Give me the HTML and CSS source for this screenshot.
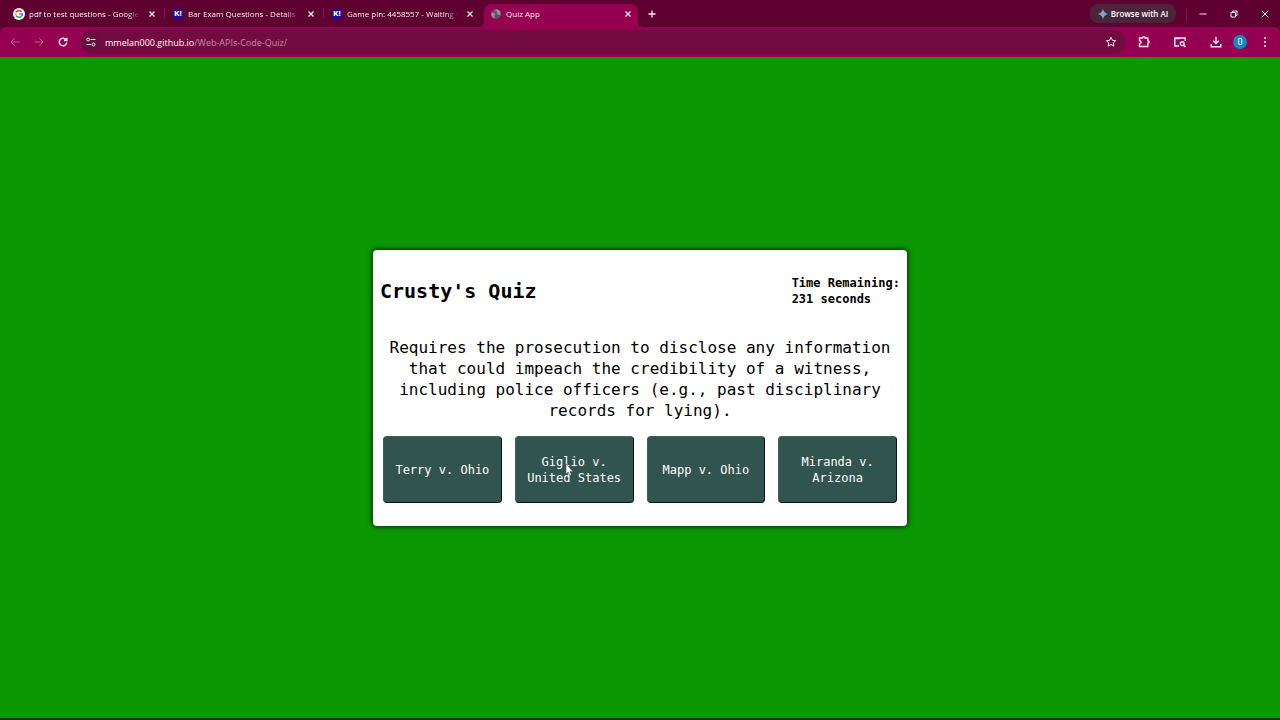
FILE: index.html
```html
<!DOCTYPE html>
<html lang="en">
<head>
<meta charset="utf-8">
<title>Quiz App</title>
<link rel="stylesheet" href="styles.css">
</head>
<body>
<header class="browser">
  <div class="strip">
    <div class="tabs" role="tablist">
      <div class="tab">
        <svg class="favicon" viewBox="0 0 12 12"><circle cx="6" cy="6" r="6" fill="#fff"/><g fill="none" stroke-width="1.6"><path d="M8.7 3.9A3.4 3.4 0 0 0 3.2 4.2" stroke="#ea4335"/><path d="M3.2 4.2A3.4 3.4 0 0 0 3.2 7.8" stroke="#fbbc05"/><path d="M3.2 7.8A3.4 3.4 0 0 0 8.3 8.5" stroke="#34a853"/><path d="M8.3 8.5A3.4 3.4 0 0 0 9.4 6H6.2" stroke="#4285f4"/></g></svg>
        <span class="tab-title fade">pdf to test questions - Google S</span>
        <button class="close" aria-label="Close tab"><svg viewBox="0 0 8 8"><path d="M1.5 1.5l5 5m0-5l-5 5"/></svg></button>
      </div>
      <div class="tab">
        <span class="favicon kahoot">K!</span>
        <span class="tab-title fade">Bar Exam Questions - Details - K</span>
        <button class="close" aria-label="Close tab"><svg viewBox="0 0 8 8"><path d="M1.5 1.5l5 5m0-5l-5 5"/></svg></button>
      </div>
      <div class="tab">
        <span class="favicon kahoot">K!</span>
        <span class="tab-title fade">Game pin: 4458557 - Waiting fo</span>
        <button class="close" aria-label="Close tab"><svg viewBox="0 0 8 8"><path d="M1.5 1.5l5 5m0-5l-5 5"/></svg></button>
      </div>
      <div class="tab active">
        <svg class="favicon globe" viewBox="0 0 12 12"><circle cx="6" cy="6" r="5" fill="#5d5262"/><path d="M1.200 5l2.600-.2 1.600 1.400-1 1.200.4 3C2.500 10 1 8 1.200 5zM5.500 1.200l3 .7 1.800 1.800.4 2.800-1.700.5L7 5.800 7.200 4 5.500 3z" fill="#a08c9c"/></svg>
        <span class="tab-title">Quiz App</span>
        <button class="close" aria-label="Close tab"><svg viewBox="0 0 8 8"><path d="M1.5 1.5l5 5m0-5l-5 5"/></svg></button>
      </div>
      <button class="new-tab" aria-label="New tab"><svg viewBox="0 0 8 8"><path d="M4 .5v7M.5 4h7"/></svg></button>
    </div>
    <button class="ai"><svg viewBox="0 0 10 10"><defs><linearGradient id="spark" x1="0" y1="0" x2="1" y2="1"><stop offset=".2" stop-color="#e9a15f"/><stop offset=".5" stop-color="#5aa9ee"/><stop offset=".9" stop-color="#5fd0a0"/></linearGradient></defs><path d="M5 0Q6 4 10 5 6 6 5 10 4 6 0 5 4 4 5 0z" fill="url(#spark)"/></svg>Browse with AI</button>
    <div class="window-controls">
      <button aria-label="Minimize"><svg viewBox="0 0 8 8"><path d="M.5 4h7"/></svg></button>
      <button aria-label="Restore"><svg viewBox="0 0 8 8"><path d="M1 2.500h4.500V7H1zM2.500 2.300V1H7v4.500H5.800"/></svg></button>
      <button aria-label="Close"><svg viewBox="0 0 8 8"><path d="M.8.8l6.400 6.400M7.200.8L.8 7.200"/></svg></button>
    </div>
  </div>
  <div class="toolbar">
    <button class="icon dim" aria-label="Back"><svg viewBox="0 0 12 12"><path d="M10.500 6H2M5.700 2.200L2 6l3.700 3.800"/></svg></button>
    <button class="icon dim" aria-label="Forward"><svg viewBox="0 0 12 12"><path d="M1.500 6H10M6.300 2.200L10 6 6.300 9.800"/></svg></button>
    <button class="icon reload" aria-label="Reload"><svg viewBox="0 0 12 12"><path d="M9.300 4A3.800 3.800 0 1 0 9.800 6.500M9.800 1.700v2.800H7"/></svg></button>
    <div class="address">
      <button class="site" aria-label="Site information"><svg viewBox="0 0 12 12"><path d="M5.500 3.500h5M1.500 8.500H6"/><circle cx="3.200" cy="3.500" r="1.400"/><circle cx="8.500" cy="8.500" r="1.500"/></svg></button>
      <a class="url" href="#">mmelan000.github.io<span>/Web-APIs-Code-Quiz/</span></a>
      <button class="icon star" aria-label="Bookmark"><svg viewBox="0 0 12 12"><path d="M6 1.300l1.400 3 3.300.4-2.400 2.200.6 3.200L6 8.500l-2.900 1.600.6-3.200-2.400-2.200 3.300-.4z"/></svg></button>
    </div>
    <div class="actions">
      <button class="icon" aria-label="Extensions"><svg viewBox="0 0 12 12"><path d="M1.500 2h3a1.300 1.300 0 0 1 2.600 0h2.700v2.700a1.300 1.300 0 0 1 0 2.600v3.200H1.500V7.800a1.500 1.500 0 0 0 0-3z"/></svg></button>
      <button class="icon" aria-label="Search this page"><svg viewBox="0 0 12 12"><path d="M5 10H.8V2h10.400v3M.8 2.500h5M9.600 9.200l1.900 1.900"/><circle cx="8.200" cy="7.700" r="1.900"/></svg></button>
      <button class="icon" aria-label="Downloads"><svg viewBox="0 0 12 12"><path d="M6 .8v6.500M3.200 4.800L6 7.500l2.800-2.700M1.200 8v2.800h9.600V8"/></svg></button>
    </div>
    <button class="avatar" aria-label="Profile">0</button>
    <button class="icon menu" aria-label="Menu"><svg viewBox="0 0 12 12"><circle cx="6" cy="2" r="1"/><circle cx="6" cy="6" r="1"/><circle cx="6" cy="10" r="1"/></svg></button>
  </div>
</header>
<main class="page">
  <section class="card">
    <div class="card-head">
      <h1>Crusty's Quiz</h1>
      <p class="timer">Time Remaining:<br>231 seconds</p>
    </div>
    <p class="question">Requires the prosecution to disclose any information that could impeach the credibility of a witness, including police officers (e.g., past disciplinary records for lying).</p>
    <div class="answers">
      <button class="answer">Terry v. Ohio</button>
      <button class="answer">Giglio v. United States<svg class="cursor" viewBox="0 0 8 12"><path d="M1 0v10l2.300-2 1.400 3.500 1.600-.7L5 7.500h3z" fill="#fff" stroke="#444" stroke-width=".5"/></svg></button>
      <button class="answer">Mapp v. Ohio</button>
      <button class="answer">Miranda v. Arizona</button>
    </div>
  </section>
</main>
</body>
</html>
```
FILE: styles.css
```css
* { box-sizing: border-box; }
body { margin: 0; min-height: 100vh; display: flex; flex-direction: column; background: #0c9705; font-family: Roboto, "Open Sans", sans-serif; border-bottom: 2px solid #0a3f08; }
button { border: 0; padding: 0; margin: 0; background: none; color: inherit; font: inherit; display: flex; align-items: center; justify-content: center; }
svg { display: block; fill: none; stroke: currentColor; flex: none; }
.browser { color: #fbe8f2; font-size: 8px; background: #5e0030; }
.strip { height: 27px; display: flex; align-items: center; }
.tabs { flex: 1; display: flex; align-items: flex-end; height: 27px; padding-left: 6px; }
.tab { width: 159px; height: 23px; display: flex; align-items: center; gap: 4px; padding: 0 9px 4px 7px; position: relative; }
.tab:not(.active)::after { content: ""; position: absolute; right: 0; top: 4px; height: 11px; width: 1px; background: #84114c; }
.tab:nth-child(3)::after { display: none; }
.tab.active { width: 154px; padding: 0 6px 4px; background: #950050; border-radius: 7px 7px 0 0; margin-left: 1px; }
.tab.active::before, .tab.active::after { content: ""; position: absolute; bottom: 0; width: 5px; height: 5px; }
.tab.active::before { left: -5px; background: radial-gradient(circle at 0 0, transparent 5px, #950050 5px); }
.tab.active::after { right: -5px; background: radial-gradient(circle at 100% 0, transparent 5px, #950050 5px); }
.tab-title { flex: 1; min-width: 0; white-space: nowrap; line-height: 16px; font-weight: 400; }
.fade { -webkit-mask-image: linear-gradient(90deg, #000 88%, transparent); mask-image: linear-gradient(90deg, #000 88%, transparent); }
.tab-title { font-family: "Open Sans", sans-serif; }
.favicon { width: 12px; height: 12px; flex: none; stroke: none; }
.kahoot { width: 10px; height: 10px; margin: 0 1px; background: #240a98; color: #fff; font-size: 8px; font-weight: 800; line-height: 10px; text-align: center; }
.close { width: 8px; height: 8px; margin-left: 4px; }
.close svg, .new-tab svg, .window-controls svg { width: 8px; height: 8px; }
.close svg, .new-tab svg { stroke-width: 1.3; }
.new-tab { width: 28px; height: 23px; padding-bottom: 4px; }
.ai { height: 19px; width: 86px; gap: 3px; border-radius: 8px; background: #4b2439; font-family: "Open Sans", sans-serif; font-weight: 600; color: #fff; white-space: nowrap; }
.ai svg { width: 10px; height: 10px; stroke: none; }
.window-controls { display: flex; margin-left: 10px; border-left: 1px solid #84114c; }
.window-controls button { width: 31px; height: 12px; }
.toolbar { height: 30px; background: #950050; border-radius: 6px 6px 0 0; display: flex; align-items: center; gap: 12px; padding: 0 9px; }
.icon { width: 12px; height: 12px; flex: none; }
.icon svg { width: 12px; height: 12px; }
.reload svg { stroke-width: 1.5; }
.dim { color: #c55b91; }
.address { flex: 1; height: 24px; border-radius: 12px; background: #740b40; display: flex; align-items: center; gap: 5px; padding: 0 9px 0 1px; }
.site { width: 18px; height: 18px; border-radius: 50%; background: #66103c; }
.site svg { width: 12px; height: 12px; }
.url { flex: 1; color: #fff; text-decoration: none; font-family: "Open Sans", sans-serif; font-size: 9px; }
.url span { color: #c78aa9; }
.actions { display: flex; align-items: center; gap: 24px; }
.actions .icon { position: relative; }
.actions .icon + .icon::before { content: ""; position: absolute; left: -12px; top: 0; width: 1px; height: 12px; background: #7a0b47; }
.actions .icon svg { stroke-width: 1.4; }
.avatar { width: 14px; height: 14px; margin-left: -1px; border-radius: 50%; background: #1687c4; color: #fff; font-size: 9px; }
.menu svg { fill: currentColor; stroke: none; }
.page { flex: 1; display: flex; align-items: center; justify-content: center; padding: 17px 16px 16px; }
.card { width: 100%; max-width: 534px; background: #fff; border-radius: 4px; box-shadow: 0 0 5px 1px #032c01; padding: 25px 7px 23px; color: #000; font-family: "DejaVu Sans Mono", monospace; }
.card-head { display: flex; justify-content: space-between; align-items: center; }
h1 { margin: 0; font-size: 20px; line-height: 32px; }
.timer { margin: 0; font-size: 12px; line-height: 16px; font-weight: bold; }
.question { margin: 30px 3px 15px; font-size: 16px; line-height: 21px; text-align: center; }
.answers { display: grid; grid-template-columns: repeat(4, 1fr); gap: 13px; padding: 0 3px; }
.answer { position: relative; height: 67px; padding: 1px 8px 0; border: 1px solid #3f5f59; border-right-color: #061412; border-bottom-color: #061412; border-radius: 4px; background: #32544e; color: #fff; font-size: 12px; line-height: 16px; text-align: center; }
.cursor { position: absolute; left: 49px; top: 27px; width: 8px; height: 12px; }
```
